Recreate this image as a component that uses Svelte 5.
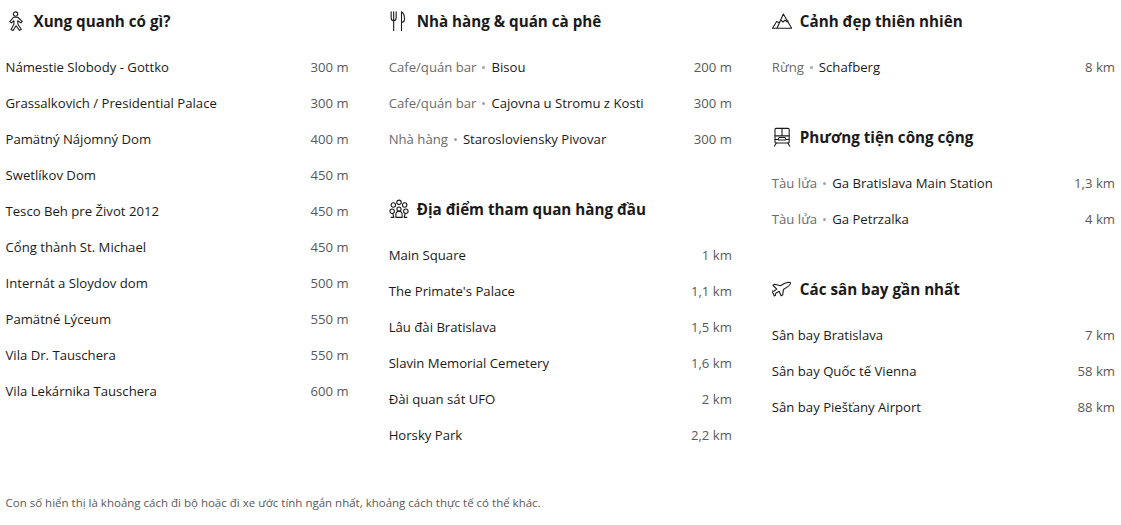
<script>
  const walk = ['Námestie Slobody - Gottko|300 m','Grassalkovich / Presidential Palace|300 m','Pamätný Nájomný Dom|400 m','Swetlíkov Dom|450 m','Tesco Beh pre Život 2012|450 m','Cổng thành St. Michael|450 m','Internát a Sloydov dom|500 m','Pamätné Lýceum|550 m','Vila Dr. Tauschera|550 m','Vila Lekárnika Tauschera|600 m'];
  const food = ['Cafe/quán bar|Bisou|200 m','Cafe/quán bar|Cajovna u Stromu z Kosti|300 m','Nhà hàng|Starosloviensky Pivovar|300 m'];
  const sights = ['Main Square|1 km',"The Primate's Palace|1,1 km",'Lâu đài Bratislava|1,5 km','Slavin Memorial Cemetery|1,6 km','Đài quan sát UFO|2 km','Horsky Park|2,2 km'];
  const nature = ['Rừng|Schafberg|8 km'];
  const transit = ['Tàu lửa|Ga Bratislava Main Station|1,3 km','Tàu lửa|Ga Petrzalka|4 km'];
  const air = ['Sân bay Bratislava|7 km','Sân bay Quốc tế Vienna|58 km','Sân bay Piešťany Airport|88 km'];
  const columns = [
    [{ icon: 'walk', title: 'Xung quanh có gì?', rows: walk }],
    [{ icon: 'food', title: 'Nhà hàng & quán cà phê', rows: food }, { icon: 'sight', title: 'Địa điểm tham quan hàng đầu', rows: sights }],
    [{ icon: 'nature', title: 'Cảnh đẹp thiên nhiên', rows: nature }, { icon: 'train', title: 'Phương tiện công cộng', rows: transit }, { icon: 'plane', title: 'Các sân bay gần nhất', rows: air }]
  ];
  const parse = (r) => { const p = r.split('|'); return p.length === 3 ? { cat: p[0], name: p[1], dist: p[2] } : { name: p[0], dist: p[1] }; };
</script>

<div class="page">
  <div class="grid">
    {#each columns as col}
      <div class="col">
        {#each col as s}
          <section>
            <h3>
              <svg class="icon" viewBox="0 0 24 24" fill="none" stroke="#1a1a1a" stroke-width="1.3" stroke-linecap="round" stroke-linejoin="round">
                {#if s.icon === 'walk'}
                  <circle cx="11.5" cy="3.6" r="2.6" />
                  <path d="M9 7.5h5l5.5 5-1.5 1.8-4-2.6.3 4.2 4 6-2.2 1.4-4-5.6-3.6 5.8-2.4-1.4 3.4-6.2v-4.2l-3 2.6-1.8-1.6z" />
                {:else if s.icon === 'food'}
                  <path d="M2.6 1v7c0 2.4 1.4 3.6 3 3.6s3-1.2 3-3.6V1M5.6 1v23" />
                  <path d="M15 24V1c2.4 1.4 3.6 5 3.6 8.5 0 2.6-1.2 4-3.6 4" />
                {:else if s.icon === 'sight'}
                  <circle cx="12" cy="12" r="2.5" />
                  <path d="M8.2 22v-3c0-3 1.6-4.4 3.8-4.4s3.8 1.4 3.8 4.4v3z" />
                  <circle cx="12" cy="4" r="2.7" /><circle cx="5.2" cy="7.2" r="2.7" /><circle cx="18.8" cy="7.2" r="2.7" />
                  <circle cx="3.8" cy="14.6" r="2.7" /><circle cx="20.2" cy="14.6" r="2.7" />
                  <path d="M2.6 22h3.2M18.2 22h3.2M4.6 17.4l1.2 4.6M19.4 17.4l-1.2 4.6" />
                {:else if s.icon === 'nature'}
                  <path d="M.6 20.8h23L13.6 3.6 6 20.8M.6 20.8l5-8.2 2.6 1.2M10.4 10.8l3 2.4 2.2-2.2 2.4 2 1.4-1" />
                {:else if s.icon === 'train'}
                  <rect x="3.6" y="1.6" width="17" height="17.6" rx="1.2" />
                  <path d="M3.6 10.6h17M12 1.6v9M3.6 15h3.6l1.4-2.4h7l1.4 2.4h3.4M8 15.5h8M5.2 19.2l-2.4 3.8M19 19.2l2.4 3.8" />
                {:else}
                  <path d="M1.2 7.5l2-1.2 7 1.8 4.5-2.6c2-1.1 6.5-2 7.4-1 .6 1-1.6 3.7-3.6 5l-4.8 3-.8 6.5-2 1.2-2.4-5.4-4 2.4-.4 2.4-1.4.8-1.2-3.4-3-1.8 1.2-.9 2.4.4 3.6-2.6z" />
                {/if}
              </svg>
              <span>{s.title}</span>
            </h3>
            <ul>
              {#each s.rows.map(parse) as r}
                <li>
                  <span class="label">
                    {#if r.cat}<span class="cat">{r.cat}</span><span class="dot"></span>{/if}<span>{r.name}</span>
                  </span>
                  <span class="dist">{r.dist}</span>
                </li>
              {/each}
            </ul>
          </section>
        {/each}
      </div>
    {/each}
  </div>
  <p class="note">Con số hiển thị là khoảng cách đi bộ hoặc đi xe ước tính ngắn nhất, khoảng cách thực tế có thể khác.</p>
</div>

<style>
  :global(body) { background: #fff; }
  .page {
    padding: 7px 6px 0 5.5px;
    font-family: "Open Sans", "Noto Sans", sans-serif;
    color: #1a1a1a;
    height: 518px;
    font-size: 13.15px;
    display: flex;
    flex-direction: column;
  }
  .grid { display: grid; grid-template-columns: repeat(3, 1fr); column-gap: 40px; }
  .col { display: flex; flex-direction: column; gap: 38px; min-width: 0; }
  h3 {
    margin: 0 0 15px;
    height: 27px;
    display: flex;
    align-items: center;
    gap: 8px;
    font-size: 15.2px;
    font-weight: 700;
    color: #1a1a1a;
  }
  .icon { width: 20px; height: 20px; flex: none; }
  ul { list-style: none; margin: 0; padding: 0; }
  li { height: 36px; display: flex; align-items: center; justify-content: space-between; }
  .label { display: flex; align-items: center; }
  .cat { color: #6b6b6b; }
  .dot { width: 3px; height: 3px; border-radius: 50%; background: #a3a3a3; margin: 0 6px; }
  .dist { color: #595959; }
  .note { margin: auto 0 0; font-size: 11.5px; color: #595959; padding-bottom: 15px; }
</style>
